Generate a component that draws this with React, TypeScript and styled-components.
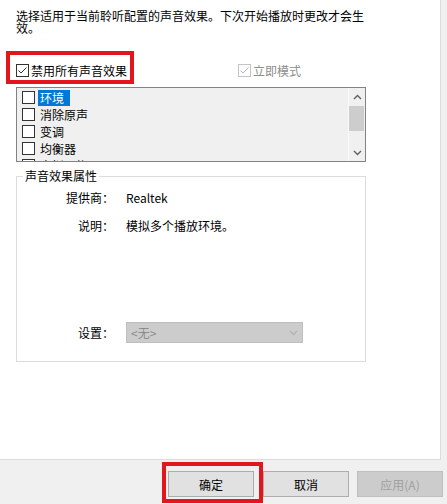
import React from 'react';
import styled, { createGlobalStyle } from 'styled-components';

const Global = createGlobalStyle`
  html, body { margin: 0; padding: 0; background: #f0f0f0; }
  body {
    font-family: "Noto Sans CJK SC", "Microsoft YaHei", sans-serif;
    font-size: 12px;
    color: #000;
  }
`;

const Window = styled.div`
  width: 447px;
  height: 504px;
  background: #f0f0f0;
  display: flex;
  flex-direction: column;
  overflow: hidden;
`;

const Panel = styled.div`
  width: 441px;
  height: 460px;
  box-sizing: border-box;
  background: #fff;
  border-right: 1px solid #dcdcdc;
  border-bottom: 1px solid #dcdcdc;
  padding: 10px 0 0 16px;
  display: flex;
  flex-direction: column;
`;

const Description = styled.div`
  width: 352px;
  line-height: 12px;
`;

const OptionsRow = styled.div`
  margin-top: 30px;
  height: 13px;
  display: flex;
  align-items: center;
`;

const CheckLabel = styled.label<{ $width?: number; $disabled?: boolean }>`
  position: relative;
  display: flex;
  align-items: center;
  gap: 2px;
  height: 13px;
  line-height: 13px;
  width: ${(p) => (p.$width ? `${p.$width}px` : 'auto')};
  color: ${(p) => (p.$disabled ? '#8d8d8d' : '#000')};
  white-space: nowrap;
`;

const Box = styled.span<{ $disabled?: boolean }>`
  width: 13px;
  height: 13px;
  box-sizing: border-box;
  flex: none;
  border: 1px solid ${(p) => (p.$disabled ? '#c4c4c4' : '#333')};
  background: #fff;
  display: flex;
  align-items: center;
  justify-content: center;
`;

const Annotation = styled.span<{ $l: number; $t: number; $w: number; $h: number }>`
  position: absolute;
  left: ${(p) => p.$l}px;
  top: ${(p) => p.$t}px;
  width: ${(p) => p.$w}px;
  height: ${(p) => p.$h}px;
  box-sizing: border-box;
  border: 4px solid #e2161c;
  pointer-events: none;
`;

const ListBox = styled.div`
  margin-top: 10px;
  width: 350px;
  height: 75px;
  box-sizing: border-box;
  border: 1px solid #828282;
  background: #f0f0f0;
  display: flex;
`;

const Items = styled.div`
  flex: 1;
  overflow: hidden;
  padding: 1px 0 0 5px;
`;

const Item = styled.div`
  height: 17px;
  display: flex;
  align-items: center;
  gap: 3px;
`;

const ItemText = styled.span<{ $selected?: boolean }>`
  line-height: 16px;
  padding: 0 6px 0 2px;
  background: ${(p) => (p.$selected ? '#0078d7' : 'transparent')};
  color: ${(p) => (p.$selected ? '#fff' : '#000')};
`;

const Scrollbar = styled.div`
  width: 17px;
  flex: none;
  box-sizing: border-box;
  border-left: 1px solid #fafafa;
  display: flex;
  flex-direction: column;
`;

const ArrowBtn = styled.div`
  height: 17px;
  display: flex;
  align-items: center;
  justify-content: center;
`;

const Thumb = styled.div`
  height: 25px;
  margin: 1px 1px 0 0;
  background: #cdcdcd;
`;

const Spacer = styled.div`
  flex: 1;
`;

const Group = styled.fieldset`
  margin: 7px 0 0;
  width: 350px;
  box-sizing: border-box;
  border: 1px solid #dcdcdc;
  padding: 7px 6px 18px;
  min-inline-size: 0;
`;

const Legend = styled.legend`
  padding: 0 2px;
  line-height: 14px;
  font-size: 12px;
`;

const PropRow = styled.div<{ $gapTop?: number }>`
  display: flex;
  align-items: center;
  gap: 12px;
  margin-top: ${(p) => p.$gapTop ?? 0}px;
  min-height: 16px;
  line-height: 16px;
`;

const PropLabel = styled.span`
  width: 91px;
  text-align: right;
  flex: none;
`;

const Select = styled.div`
  width: 177px;
  height: 21px;
  box-sizing: border-box;
  border: 1px solid #bfbfbf;
  background: #cccccc;
  color: #8c8c8c;
  display: flex;
  align-items: center;
  justify-content: space-between;
  padding: 0 4px 0 4px;
`;

const Footer = styled.div`
  flex: 1;
  display: flex;
  justify-content: flex-end;
  align-items: flex-start;
  padding: 11px 4px 0 0;
  gap: 8px;
`;

const ButtonWrap = styled.div`
  position: relative;
  margin-right: 1px;
  display: flex;
`;

const Button = styled.button<{ $disabled?: boolean }>`
  width: 86px;
  height: 26px;
  box-sizing: border-box;
  font-family: inherit;
  font-size: 12px;
  padding: 0;
  border: 1px solid ${(p) => (p.$disabled ? '#bfbfbf' : '#adadad')};
  background: ${(p) => (p.$disabled ? '#cccccc' : '#e1e1e1')};
  color: ${(p) => (p.$disabled ? '#a0a0a0' : '#000')};
`;

const Check = ({ color }: { color: string }) => (
  <svg width="11" height="11" viewBox="0 0 11 11">
    <path d="M1.5 5.5 L4 8 L9.5 2.5" fill="none" stroke={color} strokeWidth="1" />
  </svg>
);

const Chevron = ({ up, color = '#606060' }: { up?: boolean; color?: string }) => (
  <svg width="9" height="6" viewBox="0 0 9 6">
    <path
      d={up ? 'M1 5 L4.5 1.5 L8 5' : 'M1 1 L4.5 4.5 L8 1'}
      fill="none"
      stroke={color}
      strokeWidth="1.4"
    />
  </svg>
);

const effects = ['环境', '消除原声', '变调', '均衡器', '虚拟环绕'];

export default function App() {
  return (
    <Window>
      <Global />
      <Panel>
        <Description>选择适用于当前聆听配置的声音效果。下次开始播放时更改才会生效。</Description>
        <OptionsRow>
          <CheckLabel $width={222}>
            <Box>
              <Check color="#333" />
            </Box>
            禁用所有声音效果
            <Annotation $l={-10} $t={-13} $w={128} $h={33} />
          </CheckLabel>
          <CheckLabel $disabled>
            <Box $disabled>
              <Check color="#b8b8b8" />
            </Box>
            立即模式
          </CheckLabel>
        </OptionsRow>
        <ListBox>
          <Items>
            {effects.map((e, i) => (
              <Item key={e}>
                <Box />
                <ItemText $selected={i === 0}>{e}</ItemText>
              </Item>
            ))}
          </Items>
          <Scrollbar>
            <ArrowBtn>
              <Chevron up />
            </ArrowBtn>
            <Thumb />
            <Spacer />
            <ArrowBtn>
              <Chevron />
            </ArrowBtn>
          </Scrollbar>
        </ListBox>
        <Group>
          <Legend>声音效果属性</Legend>
          <PropRow>
            <PropLabel>提供商：</PropLabel>
            <span>Realtek</span>
          </PropRow>
          <PropRow $gapTop={12}>
            <PropLabel>说明：</PropLabel>
            <span>模拟多个播放环境。</span>
          </PropRow>
          <PropRow $gapTop={88}>
            <PropLabel>设置：</PropLabel>
            <Select>
              <span>&lt;无&gt;</span>
              <Chevron color="#b4b4b4" />
            </Select>
          </PropRow>
        </Group>
      </Panel>
      <Footer>
        <ButtonWrap>
          <Button>确定</Button>
          <Annotation $l={-6} $t={-9} $w={101} $h={41} />
        </ButtonWrap>
        <Button>取消</Button>
        <Button $disabled>应用(A)</Button>
      </Footer>
    </Window>
  );
}
